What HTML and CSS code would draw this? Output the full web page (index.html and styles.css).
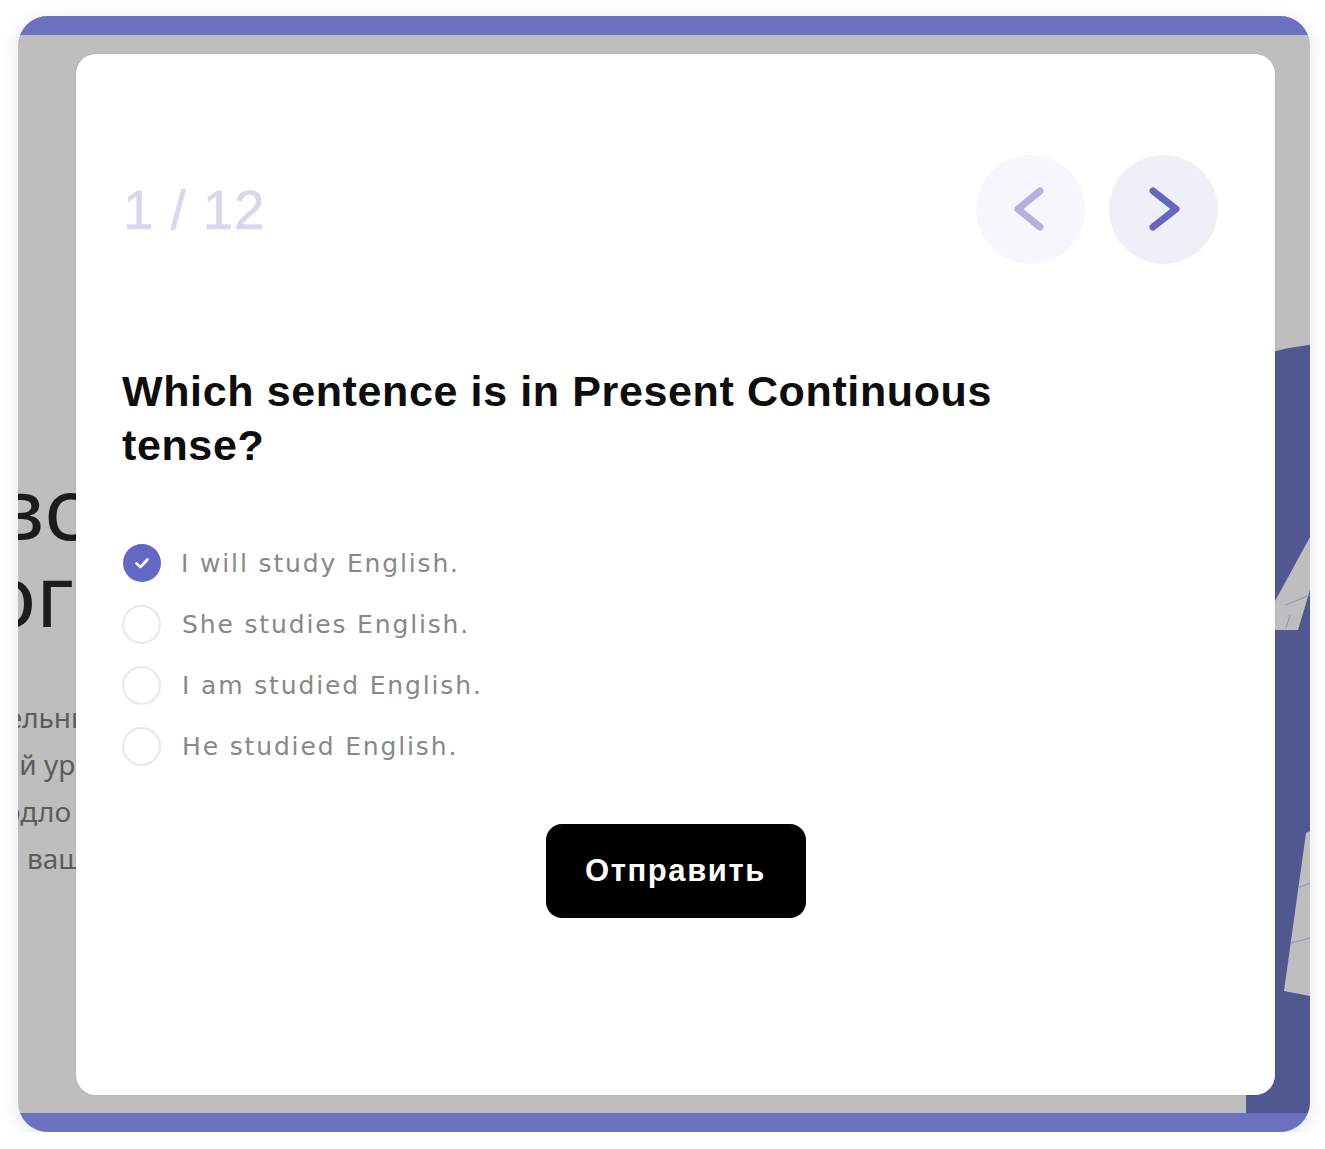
FILE: index.html
```html
<!DOCTYPE html>
<html lang="ru">
<head>
<meta charset="utf-8">
<title>Quiz</title>
<link rel="stylesheet" href="styles.css">
</head>
<body>
<div class="frame">
  <div class="backdrop" aria-hidden="true">
    <div class="band band-top"></div>
    <div class="band band-bottom"></div>
    <svg class="deco" width="80" height="780" viewBox="0 0 80 780">
      <path d="M0 20 Q 20 6 80 0 L80 770 L0 770 Z" fill="#51578f"/>
      <polygon points="29,258 64,194 64,247 52,287 29,287" fill="#bebebe"/>
      <path d="M40 262 L64 252 M44 272 L40 285" stroke="#8e92bb" stroke-width="1" fill="none"/>
      <polygon points="60,490 64,488 64,653 38,648" fill="#bebebe"/>
      <path d="M52 545 L64 540 M45 600 L64 595" stroke="#8e92bb" stroke-width="1" fill="none"/>
    </svg>
    <div class="bg-title">
      <span class="bt1">вс</span>
      <span class="bt2">ог</span>
    </div>
    <div class="bg-text">
      <span class="tx1">тельны</span>
      <span class="tx2">ый ур</span>
      <span class="tx3">одло</span>
      <span class="tx4">ваш</span>
    </div>
  </div>

  <div class="card">
    <div class="head">
      <div class="counter">1 / 12</div>
      <div class="nav">
        <button class="nav-btn prev" type="button" aria-label="Назад">
          <svg width="109" height="109" viewBox="0 0 109 109"><path d="M64 36 L42 54 L64 72" fill="none" stroke="#b4b1df" stroke-width="7" stroke-linecap="round" stroke-linejoin="round"/></svg>
        </button>
        <button class="nav-btn next" type="button" aria-label="Вперёд">
          <svg width="109" height="109" viewBox="0 0 109 109"><path d="M44 36 L67 54 L44 72" fill="none" stroke="#6466c0" stroke-width="7" stroke-linecap="round" stroke-linejoin="round"/></svg>
        </button>
      </div>
    </div>

    <h1 class="question">Which sentence is in Present Continuous tense?</h1>

    <ul class="options">
      <li class="option checked">
        <span class="radio"><svg width="38" height="38" viewBox="0 0 38 38"><path d="M13.5 19.5 L17.5 23 L24.5 15.5" fill="none" stroke="#fff" stroke-width="2.6" stroke-linecap="round" stroke-linejoin="round"/></svg></span>
        <span class="label">I will study English.</span>
      </li>
      <li class="option">
        <span class="radio"></span>
        <span class="label">She studies English.</span>
      </li>
      <li class="option">
        <span class="radio"></span>
        <span class="label">I am studied English.</span>
      </li>
      <li class="option">
        <span class="radio"></span>
        <span class="label">He studied English.</span>
      </li>
    </ul>

    <div class="actions">
      <button class="submit" type="button">Отправить</button>
    </div>
  </div>
</div>
</body>
</html>
```

FILE: styles.css
```css
* { box-sizing: border-box; }

html, body {
  margin: 0;
  padding: 0;
  background: #ffffff;
}

body {
  font-family: "Liberation Sans", Arial, sans-serif;
  padding: 16px 0 0 18px;
}

.frame {
  position: relative;
  width: 1292px;
  height: 1116px;
  border-radius: 30px;
  overflow: hidden;
  background: #bebebe;
  padding: 38px 35px 37px 58px;
  box-shadow: 0 4px 18px rgba(90, 90, 150, 0.16);
}

.backdrop {
  position: absolute;
  inset: 0;
  z-index: 0;
}

.band {
  position: absolute;
  left: 0;
  right: 0;
  height: 19px;
  background: #6b70c0;
}
.band-top { top: 0; }
.band-bottom { bottom: 0; }

.deco {
  position: absolute;
  left: 1228px;
  top: 327px;
}

.bg-title {
  position: absolute;
  left: 0;
  top: 447px;
  font-family: "Noto Sans", sans-serif;
  font-size: 86px;
  line-height: 87px;
  color: #1c1c1c;
  white-space: nowrap;
}
.bg-title span { display: block; height: 87px; overflow: hidden; }
.bt1 { margin-left: -22px; }
.bt2 { margin-left: -33px; }

.bg-text {
  position: absolute;
  left: 0;
  top: 678px;
  font-family: "Noto Sans", sans-serif;
  font-size: 28px;
  line-height: 47px;
  color: #5c5c5c;
  white-space: nowrap;
}
.bg-text span { display: block; }
.tx1 { margin-left: -24px; }
.tx2 { margin-left: -20px; }
.tx3 { margin-left: -14px; }
.tx4 { margin-left: 9px; }

.card {
  position: relative;
  z-index: 1;
  height: 100%;
  background: #ffffff;
  border-radius: 20px;
  box-shadow: 0 0 2px rgba(0, 0, 0, 0.12);
  padding: 101px 57px 0 46px;
}

.head {
  display: flex;
  align-items: center;
  justify-content: space-between;
}

.counter {
  font-family: "Liberation Sans", Arial, sans-serif;
  font-size: 55px;
  color: #d9d7ee;
  padding-left: 1px;
  letter-spacing: 0.8px;
  -webkit-text-stroke: 0.6px #d9d7ee;
}

.nav {
  display: flex;
  gap: 24px;
}

.nav-btn {
  width: 109px;
  height: 109px;
  border-radius: 50%;
  border: none;
  padding: 0;
  display: block;
  cursor: pointer;
}
.nav-btn svg { display: block; }
.prev { background: #f7f6fc; }
.next { background: #efeff8; }

.question {
  margin: 100px 0 0;
  max-width: 900px;
  font-family: "Liberation Sans", Arial, sans-serif;
  font-weight: 700;
  font-size: 43px;
  line-height: 54px;
  letter-spacing: 0.62px;
  color: #0d0d0d;
}

.options {
  list-style: none;
  margin: 72px 0 0;
  padding: 0;
  display: flex;
  flex-direction: column;
  gap: 23px;
}

.option {
  display: flex;
  align-items: center;
  gap: 21px;
  height: 38px;
}

.radio {
  width: 39px;
  height: 39px;
  border-radius: 50%;
  border: 2px solid #e7e7ee;
  flex: none;
  display: flex;
  align-items: center;
  justify-content: center;
}
.checked .radio {
  border: none;
  background: #6468c4;
  width: 38px;
  height: 38px;
  margin-left: 1px;
  margin-right: -1px;
}

.label {
  font-family: "DejaVu Sans", sans-serif;
  font-size: 25px;
  letter-spacing: 1.85px;
  color: #888888;
}

.actions {
  display: flex;
  justify-content: center;
  margin-top: 59px;
  margin-right: -11px;
}

.submit {
  width: 260px;
  height: 94px;
  border: none;
  border-radius: 16px;
  background: #000000;
  color: #ffffff;
  font-family: "Liberation Sans", Arial, sans-serif;
  font-weight: 700;
  font-size: 31px;
  letter-spacing: 1.6px;
  cursor: pointer;
}
```
